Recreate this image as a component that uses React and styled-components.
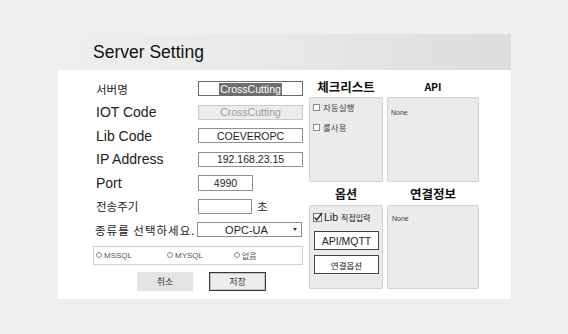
import React from "react";
import styled, { createGlobalStyle } from "styled-components";

const Global = createGlobalStyle`
  html, body { margin: 0; padding: 0; }
  body {
    background: #efefef;
    font-family: "Liberation Sans", "Noto Sans CJK KR", sans-serif;
    color: #1a1a1a;
  }
  * { box-sizing: border-box; }
`;

const Page = styled.div`
  width: 568px;
  height: 334px;
  padding: 34px 0 0 58px;
`;

const Window = styled.div`
  width: 453px;
`;

const TitleBar = styled.div`
  height: 36px;
  background: linear-gradient(to right, #efefef 0%, #e8e8e8 50%, #dcdcdc 100%);
  display: flex;
  align-items: center;
  padding-left: 35px;
  font-size: 17.5px;
  color: #111;
`;

const Body = styled.div`
  height: 229px;
  background: #fff;
  display: flex;
`;

const LeftCol = styled.div`
  width: 251px;
  padding: 11px 0 0 38px;
  display: flex;
  flex-direction: column;
`;

const FormRow = styled.div`
  display: flex;
  align-items: flex-start;
  height: 23.5px;
`;

const Label = styled.div`
  width: 102px;
  height: 15px;
  display: flex;
  align-items: center;
  font-size: ${(p) => (p.$ko ? "11.5px" : "14px")};
  letter-spacing: ${(p) => (p.$spaced ? "1px" : "0")};
  font-family: ${(p) =>
    p.$ko ? '"Noto Sans CJK KR", sans-serif' : '"Liberation Sans", sans-serif'};
  color: #222;
  white-space: nowrap;
  margin-left: ${(p) => (p.$shift ? "-1px" : "0")};
`;

const Field = styled.div`
  width: ${(p) => p.$w || 105}px;
  height: ${(p) => p.$h || 15}px;
  border: 1px solid ${(p) => (p.$disabled ? "#c9c9c9" : p.$focus ? "#6a6a6a" : "#8f8f8f")};
  background: ${(p) => (p.$disabled ? "#ececec" : "#fff")};
  color: ${(p) => (p.$disabled ? "#9c9c9c" : "#1e1e1e")};
  font-size: 10.5px;
  display: flex;
  align-items: center;
  justify-content: center;
  position: relative;
`;

const Selected = styled.span`
  background: #6e6e6e;
  color: #fff;
  padding: 0 1px;
  line-height: 12px;
`;

const Unit = styled.span`
  font-family: "Noto Sans CJK KR", sans-serif;
  font-size: 11.5px;
  margin-left: 5px;
  line-height: 15px;
  color: #222;
`;

const SelectBox = styled(Field)`
  font-size: 11px;
  padding-right: 6px;
`;

const Caret = styled.span`
  position: absolute;
  right: 4px;
  top: 5px;
  width: 0;
  height: 0;
  border-left: 2px solid transparent;
  border-right: 2px solid transparent;
  border-top: 3px solid #333;
`;

const RadioGroup = styled.div`
  margin-left: -3px;
  width: 210px;
  height: 19px;
  border: 1px solid #cfcfcf;
  display: grid;
  grid-template-columns: 71px 67px auto;
  align-items: center;
  padding-left: 2px;
`;

const RadioItem = styled.label`
  display: flex;
  align-items: center;
  gap: 2px;
  font-size: 8px;
  color: #555;
  font-family: "Liberation Sans", "Noto Sans CJK KR", sans-serif;
`;

const RadioDot = styled.span`
  width: 6px;
  height: 6px;
  border-radius: 50%;
  border: 1px solid #8a8a8a;
  background: #fff;
`;

const ButtonRow = styled.div`
  display: flex;
  gap: 16px;
  margin: 7px 0 0 41px;
`;

const DialogButton = styled.div`
  width: ${(p) => p.$w}px;
  height: 19px;
  display: flex;
  align-items: center;
  justify-content: center;
  font-family: "Noto Sans CJK KR", sans-serif;
  font-size: 9px;
  color: #333;
  background: ${(p) => (p.$primary ? "#ededed" : "#e4e4e4")};
  border: ${(p) => (p.$primary ? "1px solid #3a3a3a" : "none")};
  box-shadow: ${(p) => (p.$primary ? "inset 0 0 0 1px #c4c4c4" : "none")};
`;

const RightGrid = styled.div`
  display: grid;
  grid-template-columns: 74px 92px;
  grid-template-rows: 27px 85px 23px 84px;
  column-gap: 4px;
`;

const Heading = styled.div`
  display: flex;
  align-items: center;
  justify-content: center;
  font-weight: bold;
  font-family: "Noto Sans CJK KR", sans-serif;
  font-size: ${(p) => p.$size}px;
  padding-top: ${(p) => p.$pt || 0}px;
  color: #111;
`;

const Panel = styled.div`
  background: #ebebeb;
  border: 1px solid #d3d3d3;
  border-radius: 2px;
  padding: ${(p) => p.$pad};
  display: flex;
  flex-direction: column;
  gap: ${(p) => p.$gap || 0}px;
`;

const CheckItem = styled.div`
  display: flex;
  align-items: center;
  gap: 3px;
  height: 10px;
  font-family: "Noto Sans CJK KR", sans-serif;
  font-size: 8.5px;
  color: #444;
`;

const CheckBox = styled.span`
  width: 7px;
  height: 7px;
  border: 1px solid #8a8a8a;
  background: #fff;
`;

const LibRow = styled.div`
  display: flex;
  align-items: center;
  height: 12px;
  font-family: "Liberation Sans", "Noto Sans CJK KR", sans-serif;
  font-size: 10.5px;
  color: #222;
  margin-bottom: 3px;
`;

const LibText = styled.span`
  margin-left: 1px;
`;

const SmallKo = styled.span`
  font-family: "Noto Sans CJK KR", sans-serif;
  font-size: 8px;
  margin-left: 3px;
`;

const PanelButton = styled.div`
  width: 65px;
  height: 19px;
  margin-left: 1px;
  border: 1.5px solid #444;
  background: #fff;
  display: flex;
  align-items: center;
  justify-content: center;
  font-size: ${(p) => p.$size}px;
  font-family: "Liberation Sans", "Noto Sans CJK KR", sans-serif;
  color: #222;
`;

const NoneText = styled.div`
  font-size: 7px;
  color: #444;
  font-family: "Liberation Sans", sans-serif;
`;

export default function App() {
  return (
    <>
      <Global />
      <Page>
        <Window>
          <TitleBar>Server Setting</TitleBar>
          <Body>
            <LeftCol>
              <FormRow>
                <Label $ko>서버명</Label>
                <Field $focus>
                  <Selected>CrossCutting</Selected>
                </Field>
              </FormRow>
              <FormRow>
                <Label>IOT Code</Label>
                <Field $disabled>CrossCutting</Field>
              </FormRow>
              <FormRow>
                <Label>Lib Code</Label>
                <Field>COEVEROPC</Field>
              </FormRow>
              <FormRow>
                <Label>IP Address</Label>
                <Field>192.168.23.15</Field>
              </FormRow>
              <FormRow>
                <Label>Port</Label>
                <Field $w={55} $h={16}>4990</Field>
              </FormRow>
              <FormRow>
                <Label $ko>전송주기</Label>
                <Field $w={54} />
                <Unit>초</Unit>
              </FormRow>
              <FormRow>
                <Label $ko $spaced $shift>종류를 선택하세요.</Label>
                <SelectBox>
                  OPC-UA
                  <Caret />
                </SelectBox>
              </FormRow>
              <RadioGroup>
                <RadioItem><RadioDot />MSSQL</RadioItem>
                <RadioItem><RadioDot />MYSQL</RadioItem>
                <RadioItem><RadioDot />없음</RadioItem>
              </RadioGroup>
              <ButtonRow>
                <DialogButton $w={56}>취소</DialogButton>
                <DialogButton $w={57} $primary>저장</DialogButton>
              </ButtonRow>
            </LeftCol>
            <RightGrid>
              <Heading $size={12.5} $pt={5}>체크리스트</Heading>
              <Heading $size={10.5} $pt={5}>API</Heading>
              <Panel $pad="4px 3px" $gap={10}>
                <CheckItem><CheckBox />자동실행</CheckItem>
                <CheckItem><CheckBox />룰사용</CheckItem>
              </Panel>
              <Panel $pad="11px 3px">
                <NoneText>None</NoneText>
              </Panel>
              <Heading $size={12}>옵션</Heading>
              <Heading $size={12.5}>연결정보</Heading>
              <Panel $pad="5px 3px" $gap={5}>
                <LibRow>
                  <svg width="10" height="10" viewBox="0 0 10 10">
                    <rect x="0.5" y="1.5" width="8" height="8" fill="#fff" stroke="#777" />
                    <path d="M1.5 5.5 L3.8 8 L9 0.8" fill="none" stroke="#222" strokeWidth="1.4" />
                  </svg>
                  <LibText>Lib</LibText>
                  <SmallKo>직접입력</SmallKo>
                </LibRow>
                <PanelButton $size={10.5}>API/MQTT</PanelButton>
                <PanelButton $size={8.5}>연결옵션</PanelButton>
              </Panel>
              <Panel $pad="9px 4px">
                <NoneText>None</NoneText>
              </Panel>
            </RightGrid>
          </Body>
        </Window>
      </Page>
    </>
  );
}
